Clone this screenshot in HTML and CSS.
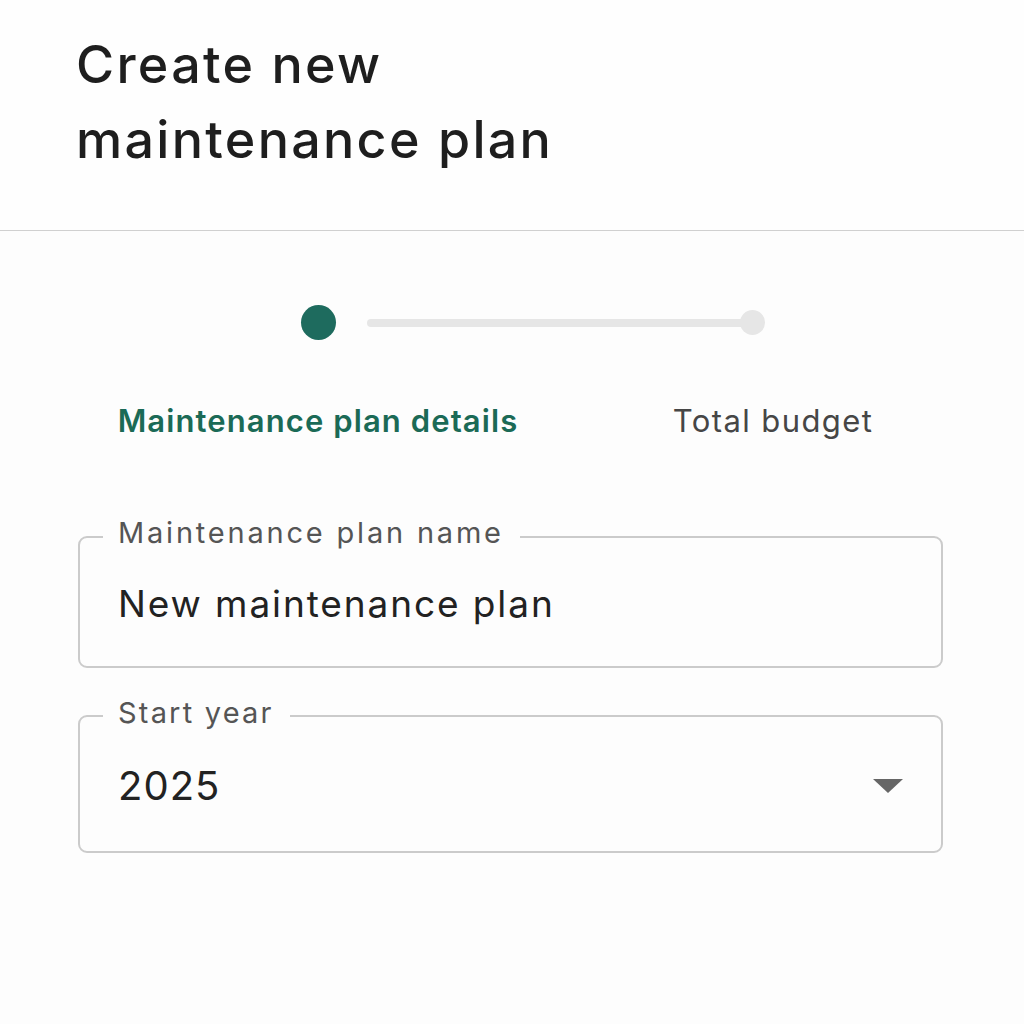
FILE: index.html
```html
<!DOCTYPE html>
<html lang="en">
<head>
<meta charset="utf-8">
<title>Create new maintenance plan</title>
<link rel="stylesheet" href="styles.css">
</head>
<body>
  <header class="page-header">
    <h1 class="page-title">Create new<br>maintenance plan</h1>
  </header>
  <main class="content">
    <div class="stepper">
      <span class="step-dot step-dot--active"></span>
      <span class="step-track"></span>
      <span class="step-dot step-dot--end"></span>
    </div>
    <div class="step-labels">
      <span class="step-label step-label--active">Maintenance plan details</span>
      <span class="step-label">Total budget</span>
    </div>
    <form class="form">
      <fieldset class="field">
        <legend class="field-label">Maintenance plan name</legend>
        <div class="field-value">New maintenance plan</div>
      </fieldset>
      <fieldset class="field field--select">
        <legend class="field-label field-label--short">Start year</legend>
        <div class="select-row">
          <span class="field-value field-value--year">2025</span>
          <span class="caret"></span>
        </div>
      </fieldset>
    </form>
  </main>
</body>
</html>
```

FILE: styles.css
```css
html, body {
  margin: 0;
  padding: 0;
  background: #fdfdfd;
}
body {
  font-family: Inter, "Noto Sans", sans-serif;
  color: #1f1f1f;
}
.page-header {
  padding: 27px 76px 53px;
  border-bottom: 1px solid #d0d0d0;
  background: #fefefe;
}
.page-title {
  margin: 0;
  font-size: 52px;
  line-height: 75px;
  font-weight: 500;
  color: #1e1e1e;
  letter-spacing: 2.3px;
}
.content {
  padding: 0 81px 0 78px;
}
.stepper {
  display: flex;
  align-items: center;
  padding-left: 223px;
  margin-top: 74px;
}
.step-dot {
  display: block;
  border-radius: 50%;
  flex: none;
}
.step-dot--active {
  width: 35px;
  height: 35px;
  background: #1e6b5e;
}
.step-track {
  display: block;
  width: 381px;
  height: 8px;
  margin-left: 31px;
  background: #e6e6e6;
  border-radius: 4px 0 0 4px;
}
.step-dot--end {
  width: 25px;
  height: 25px;
  margin-left: -8px;
  background: #e6e6e6;
}
.step-labels {
  display: grid;
  grid-template-columns: 480px 430px;
  margin-top: 63px;
}
.step-label {
  text-align: center;
  font-size: 31px;
  line-height: 36px;
  color: #464646;
  letter-spacing: 1.4px;
}
.step-label--active {
  color: #1b6a56;
  font-weight: 600;
  letter-spacing: 1.1px;
}
.form {
  display: flex;
  flex-direction: column;
  gap: 28px;
  margin-top: 77px;
}
.field {
  margin: 0;
  padding: 24px 38px 40px;
  border: 2px solid #cbcbcb;
  border-radius: 9px;
  min-width: 0;
}
.field-label {
  margin-left: -15px;
  padding: 0 16px 8px 15px;
  font-size: 29px;
  line-height: 34px;
  color: #555;
  letter-spacing: 2.8px;
}
.field-label--short {
  padding-bottom: 5px;
  letter-spacing: 2.2px;
}
.field-value {
  font-size: 37px;
  line-height: 44px;
  color: #222;
  letter-spacing: 1.9px;
}
.field--select {
  padding-top: 29px;
  padding-bottom: 43px;
}
.select-row {
  display: flex;
  align-items: center;
  justify-content: space-between;
}
.field-value--year {
  font-size: 40px;
  letter-spacing: 1px;
}
.caret {
  width: 0;
  height: 0;
  border-left: 15px solid transparent;
  border-right: 15px solid transparent;
  border-top: 14px solid #666;
}
```
